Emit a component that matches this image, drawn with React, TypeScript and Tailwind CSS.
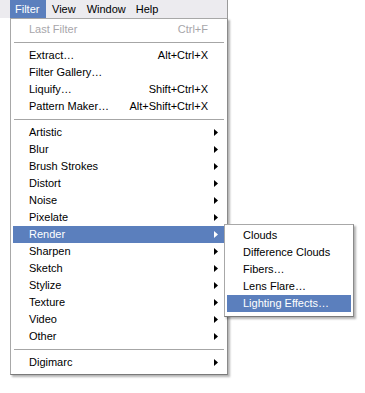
import React from "react";

type Item =
  | { type: "item"; label: string; shortcut?: string; sub?: boolean; disabled?: boolean; active?: boolean }
  | { type: "sep" };

const items: Item[] = [
  { type: "item", label: "Last Filter", shortcut: "Ctrl+F", disabled: true },
  { type: "sep" },
  { type: "item", label: "Extract…", shortcut: "Alt+Ctrl+X" },
  { type: "item", label: "Filter Gallery…" },
  { type: "item", label: "Liquify…", shortcut: "Shift+Ctrl+X" },
  { type: "item", label: "Pattern Maker…", shortcut: "Alt+Shift+Ctrl+X" },
  { type: "sep" },
  { type: "item", label: "Artistic", sub: true },
  { type: "item", label: "Blur", sub: true },
  { type: "item", label: "Brush Strokes", sub: true },
  { type: "item", label: "Distort", sub: true },
  { type: "item", label: "Noise", sub: true },
  { type: "item", label: "Pixelate", sub: true },
  { type: "item", label: "Render", sub: true, active: true },
  { type: "item", label: "Sharpen", sub: true },
  { type: "item", label: "Sketch", sub: true },
  { type: "item", label: "Stylize", sub: true },
  { type: "item", label: "Texture", sub: true },
  { type: "item", label: "Video", sub: true },
  { type: "item", label: "Other", sub: true },
  { type: "sep" },
  { type: "item", label: "Digimarc", sub: true },
];

const subItems = ["Clouds", "Difference Clouds", "Fibers…", "Lens Flare…", "Lighting Effects…"];

function Arrow({ white }: { white?: boolean }) {
  return (
    <svg width="4" height="7" viewBox="0 0 4 7" className="shrink-0">
      <path d="M0 0 L4 3.5 L0 7 Z" fill={white ? "#ffffff" : "#000000"} />
    </svg>
  );
}

export default function App() {
  return (
    <div
      className="relative w-[365px] h-[393px] bg-white text-[11px] text-black"
      style={{ fontFamily: '"Liberation Sans", Arial, sans-serif' }}
    >
      {/* menu bar */}
      <div className="w-[228px] h-[18px] bg-[#ecebef] flex items-stretch border-r border-[#9a9a9a]">
        <div className="ml-[10px] w-[36px] bg-[#5b7fbd] text-white flex items-center pl-[5px]">Filter</div>
        <div className="ml-[6px] flex items-center">View</div>
        <div className="ml-[11px] flex items-center">Window</div>
        <div className="ml-[10px] flex items-center">Help</div>
      </div>

      {/* dropdown */}
      <div className="ml-[10px] w-[218px] bg-white border border-[#a8a8a8] border-r-[#8a8a8a] border-b-[#7a7a7a] shadow-[2px_2px_2px_rgba(0,0,0,0.3)] pt-[2px] pb-[3px] px-[2px]">
        {items.map((it, i) =>
          it.type === "sep" ? (
            <div key={i} className="h-[9px] flex items-center px-[1px]">
              <div className="w-full h-px bg-[#a6a6a6]" />
            </div>
          ) : (
            <div
              key={i}
              className={
                "h-[17px] flex items-center pl-[16px] pr-[4px] " +
                (it.active ? "bg-[#5b7fbd] text-white " : "") +
                (it.disabled ? "text-[#a7a6aa] " : "")
              }
            >
              <span className="flex-1 whitespace-nowrap">{it.label}</span>
              {it.shortcut && <span className="whitespace-nowrap mr-[13px]">{it.shortcut}</span>}
              {it.sub && <span className="mr-[3px]"><Arrow white={it.active} /></span>}
            </div>
          )
        )}
      </div>

      {/* submenu */}
      <div className="absolute left-[224px] top-[224px] w-[130px] bg-white border border-[#a8a8a8] border-r-[#8a8a8a] border-b-[#7a7a7a] shadow-[2px_2px_2px_rgba(0,0,0,0.3)] pt-[2px] pb-[4px] px-[2px]">
        {subItems.map((s, i) => (
          <div
            key={s}
            className={
              "h-[17px] flex items-center pl-[16px] whitespace-nowrap " +
              (i === subItems.length - 1 ? "bg-[#5b7fbd] text-white" : "")
            }
          >
            {s}
          </div>
        ))}
      </div>
    </div>
  );
}
